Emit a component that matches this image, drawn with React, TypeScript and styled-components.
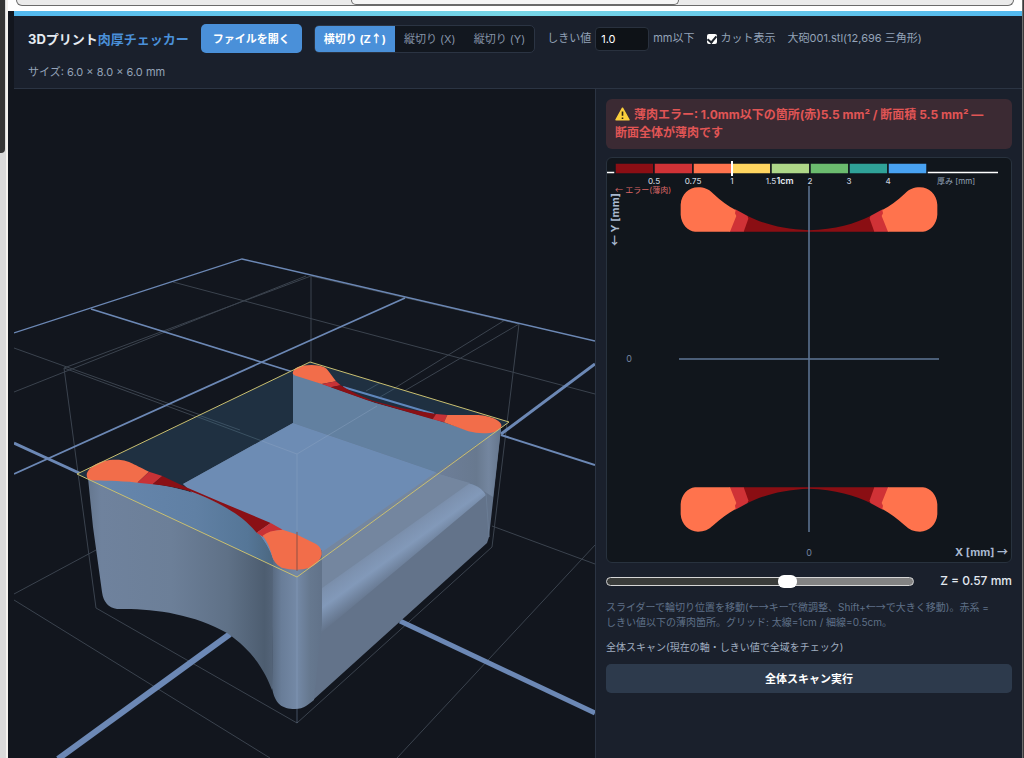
import React, { useState } from 'react';
import styled, { createGlobalStyle } from 'styled-components';

const GlobalStyle = createGlobalStyle`
  * { box-sizing: border-box; }
  body {
    margin: 0;
    background: #dcdcdc;
    font-family: Inter, "Noto Sans CJK JP", sans-serif;
    font-size: 11px;
    color: #e2e8f0;
  }
  button, input { font-family: inherit; }
`;

const Desktop = styled.div`
  display: flex;
  min-height: 100vh;
  background: #3a3a3a;
`;

const DesktopEdge = styled.div`
  flex: none;
  width: 8px;
  background: #dadada;
  border-right: 2px solid #f4f2ee;
`;

const DarkDock = styled.div`
  width: 5px;
  height: 153px;
  background: #353535;
  border-bottom-right-radius: 4px;
`;

const BrowserWindow = styled.div`
  flex: 1;
  min-width: 0;
  display: flex;
  flex-direction: column;
  background: #12161e;
  border-right: 1px solid #6d6d6d;
  margin-right: 1px;
`;

const BrowserBar = styled.div`
  flex: none;
  height: 11px;
  padding: 0 8px;
  background: #ffffff;
`;

const TabStrip = styled.div`
  display: flex;
  justify-content: center;
  height: 6px;
  background: #ebebeb;
  border: 1px solid #6b6b6b;
  border-top: 0;
  border-radius: 0 0 14px 14px;
`;

const AddressPill = styled.div`
  width: 33%;
  height: 5px;
  background: #f6f6f6;
  border: 1px solid #6b6b6b;
  border-top: 0;
  border-radius: 0 0 10px 10px;
`;

const Page = styled.div`
  flex: 1;
  display: flex;
  flex-direction: column;
  margin-left: 6px;
`;

const AccentStripe = styled.div`
  flex: none;
  height: 5px;
  background: linear-gradient(90deg, #53b9ef, #78d6e6 50%, #53b9ef);
`;

const Header = styled.header`
  display: flex;
  flex-wrap: wrap;
  align-items: center;
  gap: 12px;
  padding: 8px 14px;
  background: #1a202c;
  border-bottom: 1px solid #2b3443;
`;

const Title = styled.h1`
  margin: 0;
  font-size: 13px;
  line-height: 20px;
  font-weight: 700;
  color: #e6ebf2;
  white-space: nowrap;
`;

const TitleAccent = styled.span`
  color: #4a90d9;
`;

const Arrow = styled.span`
  font-family: "Noto Sans CJK JP", sans-serif;
`;

const SvgArrow = styled.tspan`
  font-family: "Noto Sans CJK JP", sans-serif;
`;

const Button = styled.button<{ $wide?: boolean }>`
  width: ${(p) => (p.$wide ? '100%' : 'auto')};
  height: 29px;
  padding: 0 12px;
  border: 0;
  border-radius: 5px;
  background: ${(p) => (p.$wide ? '#2d3a4c' : '#4a90d9')};
  color: #ffffff;
  font-size: 11px;
  line-height: 16px;
  font-weight: 700;
  cursor: pointer;
`;

const Segments = styled.div`
  display: flex;
  height: 28px;
  overflow: hidden;
  background: #12171f;
  border: 1px solid #2b3443;
  border-radius: 5px;
`;

const Segment = styled.button<{ $active: boolean }>`
  padding: 0 9px;
  border: 0;
  background: ${(p) => (p.$active ? '#4a90d9' : 'transparent')};
  color: ${(p) => (p.$active ? '#ffffff' : '#8593a8')};
  font-size: 11px;
  line-height: 16px;
  font-weight: ${(p) => (p.$active ? 700 : 400)};
  white-space: nowrap;
  cursor: pointer;
`;

const Field = styled.label`
  display: flex;
  align-items: center;
  gap: 4px;
  font-size: 11px;
  line-height: 15px;
  color: #94a3b8;
  white-space: nowrap;
`;

const NumberBox = styled.input`
  width: 54px;
  height: 24px;
  padding: 0 5px;
  background: #0e1217;
  border: 1px solid #29313e;
  border-radius: 4px;
  color: #ffffff;
  font-size: 11px;
`;

const TickBox = styled.input`
  appearance: none;
  display: grid;
  place-items: center;
  width: 10px;
  height: 10px;
  margin: 0;
  background: #ffffff;
  border-radius: 2px;
  &:checked::before {
    content: "";
    width: 4px;
    height: 7px;
    border: solid #1d232c;
    border-width: 0 2px 2px 0;
    transform: rotate(40deg);
  }
`;

const Meta = styled.span`
  font-size: 11px;
  line-height: 15px;
  color: #94a3b8;
  white-space: nowrap;
`;

const Main = styled.main`
  flex: 1;
  display: grid;
  grid-template-columns: minmax(0, 1fr) 427px;
`;

const Viewport = styled.section`
  display: flex;
  min-width: 0;
  overflow: hidden;
  background: #12161e;
`;

const SceneSvg = styled.svg`
  display: block;
  width: 100%;
  height: 100%;
`;

const SidePanel = styled.aside`
  display: flex;
  flex-direction: column;
  gap: 8px;
  padding: 10px;
  background: #1a202c;
  border-left: 1px solid #2b3443;
`;

const ErrorBox = styled.div`
  padding: 7px 18px 7px 9px;
  border-radius: 6px;
  background: #3b2a33;
  color: #e05555;
  font-size: 12px;
  line-height: 18px;
  font-weight: 700;
`;

const WarningIcon = styled.svg`
  width: 15px;
  height: 14px;
  margin-right: 4px;
  vertical-align: -2px;
`;

const SectionCard = styled.div`
  overflow: hidden;
  background: #11161c;
  border: 1px solid #28323e;
  border-radius: 6px;
`;

const SectionSvg = styled.svg`
  display: block;
  width: 100%;
`;

const SliderRow = styled.label`
  display: flex;
  align-items: center;
  gap: 26px;
  height: 20px;
`;

const Slider = styled.input<{ $fill: number }>`
  appearance: none;
  flex: 1;
  min-width: 0;
  height: 9px;
  margin: 0;
  border: 1px solid #d6d6d6;
  border-radius: 5px;
  background: linear-gradient(90deg, #3a3c3a ${(p) => p.$fill}%, #838383 ${(p) => p.$fill}%);
  &::-webkit-slider-thumb {
    appearance: none;
    width: 19px;
    height: 13px;
    border-radius: 6px;
    background: #ffffff;
  }
`;

const SliderValue = styled.output`
  font-size: 12px;
  line-height: 16px;
  font-weight: 500;
  color: #e2e8f0;
  white-space: nowrap;
`;

const Hint = styled.p`
  margin: 0;
  padding-right: 14px;
  font-size: 10px;
  line-height: 15px;
  color: #5f7088;
`;

const ScanLabel = styled.h2`
  margin: 0;
  font-size: 10px;
  line-height: 18px;
  font-weight: 400;
  color: #a0aec0;
`;

const THICK = '#6c88b5';
const THIN = '#3b434e';

function Scene() {
  return (
    <SceneSvg viewBox="14 89 581 669" preserveAspectRatio="xMidYMid slice" role="img">
      <defs>
        <linearGradient id="outer" gradientUnits="userSpaceOnUse" x1="88" y1="0" x2="274" y2="0">
          <stop offset="0" stopColor="#65778f" />
          <stop offset="0.07" stopColor="#6f829d" />
          <stop offset="0.45" stopColor="#6c7f98" />
          <stop offset="0.75" stopColor="#5f7187" />
          <stop offset="0.95" stopColor="#4d5d70" />
          <stop offset="1" stopColor="#55657a" />
        </linearGradient>
        <linearGradient id="outerTint" gradientUnits="userSpaceOnUse" x1="100" y1="0" x2="274" y2="0">
          <stop offset="0" stopColor="#6686ad" />
          <stop offset="0.55" stopColor="#6080a4" />
          <stop offset="0.85" stopColor="#557697" />
          <stop offset="1" stopColor="#4b6780" />
        </linearGradient>
        <linearGradient id="post" gradientUnits="userSpaceOnUse" x1="271" y1="0" x2="323" y2="0">
          <stop offset="0" stopColor="#56677d" />
          <stop offset="0.2" stopColor="#697d98" />
          <stop offset="0.5" stopColor="#7489a6" />
          <stop offset="0.75" stopColor="#66788f" />
          <stop offset="1" stopColor="#617289" />
        </linearGradient>
        <linearGradient id="rail" gradientUnits="userSpaceOnUse" x1="388" y1="530" x2="414" y2="566">
          <stop offset="0" stopColor="#74869f" />
          <stop offset="0.3" stopColor="#7d92b0" />
          <stop offset="0.55" stopColor="#8299b9" />
          <stop offset="0.8" stopColor="#70839e" />
          <stop offset="1" stopColor="#63738a" />
        </linearGradient>
        <linearGradient id="farPost" gradientUnits="userSpaceOnUse" x1="440" y1="0" x2="501" y2="0">
          <stop offset="0" stopColor="#6d7e98" />
          <stop offset="0.6" stopColor="#68798f" />
          <stop offset="0.8" stopColor="#74869f" />
          <stop offset="1" stopColor="#64758c" />
        </linearGradient>
        <clipPath id="slicePlane">
          <path d="M310 362 L509 422 L297 577 L77 474 Z" />
        </clipPath>
      </defs>

      <g fill="none" stroke={THIN} strokeWidth="1">
        <path d="M173 282 L595 394" />
        <path d="M306 276 L14 392" />
        <path d="M14 348 L234 427" />
        <path d="M505 320 L377 399" />
        <path d="M14 594 L96 550" />
        <path d="M14 600 L270 758" />
        <path d="M492 526 L595 564" />
        <path d="M595 545 L397 758" />
        <path d="M311 362 V276 L519 324 L492 547 L297 723 L96 608 L64 368 L311 276" />
        <path d="M64 368 L297 454 M519 324 L370 411" />
      </g>

      <g fill="none" stroke={THICK}>
        <path d="M14 333 L242 259 L595 341" strokeWidth="1.3" />
        <path d="M91 309 L293 372" strokeWidth="1.6" />
        <path d="M405 298 L262 362 L14 474" strokeWidth="1.8" />
        <path d="M14 443 L90 478" strokeWidth="3" />
        <path d="M595 364 L501 434" strokeWidth="3" />
        <path d="M501 435 L595 465" strokeWidth="2" />
        <path d="M400 621 L595 713" strokeWidth="5" />
        <path d="M230 634 L58 759" strokeWidth="6" />
      </g>

      <path d="M310 362 L509 422 L297 577 L77 474 Z" fill="#1f3041" />
      <path d="M343 387 L434 414" fill="none" stroke="#5f87bc" strokeWidth="2" />
      <path d="M366 391 L414 363 M380 397 L430 368 M190 414 L262 441 M190 412 L240 430" fill="none" stroke="#3b5062" strokeWidth="1" clipPath="url(#slicePlane)" />

      <path d="M293 373 L322 384 L375 403 L433 419 L470 431 L501 429 L489 537 L487 543 L313 700 L285 650 L240 520 L183 484 L293 423 Z" fill="#63738a" />
      <path d="M293 373 L322 384 L375 403 L433 419 L470 431 L501 429 L489 490 L474 485 L293 423 Z" fill="#6280a0" />
      <path d="M293 423 L474 485 L321 592 L240 540 L183 484 Z" fill="#6d8cb4" />
      <path d="M435 473 L501 428 L493 497 L474 485 Z" fill="url(#farPost)" />
      <path d="M322 552 L435 473 L474 485 Q482 488 486 495 L320 634 Z" fill="url(#rail)" />
      <path d="M322 560 L435 473 L470 483 L322 588 Z" fill="#74869f" />
      <path d="M486 493 L489 537" stroke="#6b7d95" strokeWidth="1" />

      <path d="M88 478 L93 527 L102 592 Q104 607 117 609 C150 608 192 613 227 633 C255 652 266 674 272 690 L274 562 C266 538 250 518 213 501 C180 485 140 481 88 478 Z" fill="url(#outer)" />
      <path d="M88 478 L93 527 L102 592 Q104 607 117 609 C150 608 192 613 227 633 C255 652 266 674 272 690 L274 562 C266 538 250 518 213 501 C180 485 140 481 88 478 Z" fill="url(#outerTint)" clipPath="url(#slicePlane)" />
      <path d="M273 560 L272 688 C275 704 282 709 295 709 C304 709 309 704 314 700 L319 650 L322 625 V550 Z" fill="url(#post)" />

      <g transform="translate(60 340) scale(.33333)">
        <path d="M80 405 C82 382 120 358 170 359 C205 360 215 370 267 395 L232 428 C170 421 130 424 92 421 Q80 418 80 405Z" fill="#f26d4a" />
        <path d="M267 395 L307 408 L278 433 L232 428Z" fill="#c83236" />
        <path d="M307 408 L375 440 L480 485 L632 549 L590 578 C555 537 520 513 460 483 C400 453 350 440 278 433Z" fill="#8a1015" />
        <path d="M632 549 L668 569 Q625 573 608 590 L590 578Z" fill="#c83236" />
      </g>
      <g transform="translate(60 520) scale(.33333)">
        <path d="M608 47 Q625 31 668 29 L707 42 L768 72 Q786 82 785 103 Q780 130 750 143 Q710 155 665 143 Q640 132 634 100 Q625 68 608 47Z" fill="#f26d4a" />
      </g>
      <g transform="translate(240 340) scale(.33333)">
        <path d="M158 100 Q160 75 215 75 C245 76 258 80 268 97 L288 124 L245 132 L172 109 Q160 106 158 100Z" fill="#f26d4a" />
        <path d="M288 124 L302 136 L272 142 L245 132Z" fill="#c83236" />
        <path d="M302 136 Q345 163 400 183 L480 203 L588 222 L578 238 L480 209 L380 180 L272 142Z" fill="#8a1015" />
        <path d="M588 222 L622 225 L612 247 L578 238Z" fill="#c83236" />
        <path d="M622 225 L715 225 C755 228 787 243 784 260 C775 280 730 285 685 274 L612 247Z" fill="#f26d4a" />
      </g>

      <path d="M262 441 L297 454 L377 406 M297 454 V531 M297 577 V723" fill="none" stroke="#8fa6c4" strokeOpacity=".4" />
      <path d="M297 532 V571" stroke="#8f5143" strokeWidth="1" />
      <path d="M310 362 L509 422 L297 577 L77 474 Z" fill="none" stroke="#c9bf70" strokeWidth="1" />
    </SceneSvg>
  );
}

const BANDS = ['#8b0e14', '#d03236', '#ff734d', '#ffd560', '#aed788', '#6bbb6e', '#2fa298', '#48a2f2'];
const LIMITS = ['0.5', '0.75', '1', '1.5', '2', '3', '4'];

function WallHalf() {
  return (
    <>
      <path d="M455 384 C500 407 560 424 640 427 V431 H441 Z" fill="#8a0e13" />
      <path d="M418 364 L455 384 L457 392 L443 431 H400 Z" fill="#d03236" />
      <path d="M254 350 C256 319 279 298 306 298 C325 298 337 303 352 317 C375 338 395 353 419 366 L417 376 L421 384 L402 431 H297 C274 428 256 409 254 380 Z" fill="#ff734d" />
    </>
  );
}

function Wall() {
  return (
    <g>
      <WallHalf />
      <g transform="translate(1278 0) scale(-1 1)">
        <WallHalf />
      </g>
    </g>
  );
}

function SectionView() {
  return (
    <SectionSvg viewBox="607 158 404 404" role="img">
      <g transform="translate(596 88) scale(.33333)">
        <Wall />
      </g>
      <g transform="translate(596 631) scale(.33333 -.33333)">
        <Wall />
      </g>
      <g stroke="#5f7796" strokeWidth="2" strokeOpacity=".75">
        <path d="M809 186 V532" />
        <path d="M679 359 H939" />
      </g>
      <path d="M607 172.500 H998" stroke="#ffffff" strokeWidth="1.500" />
      {BANDS.map((color, i) => (
        <rect key={color} x={615 + i * 39} y="163" width="39" height="11" fill={color} stroke="#11161c" strokeWidth="1.500" />
      ))}
      <path d="M732 161 V176" stroke="#ffffff" strokeWidth="2" />
      <g fill="#c6cedb" fontSize="8" fontWeight="500" textAnchor="middle">
        {LIMITS.map((limit, i) => (
          <text key={limit} x={654 + i * 39} y="184">{limit}</text>
        ))}
      </g>
      <text x="785" y="184" fill="#e2e8f0" fontSize="9" fontWeight="600" textAnchor="middle">1cm</text>
      <text x="937" y="184" fill="#94a3b8" fontSize="8">厚み [mm]</text>
      <text x="615" y="193" fill="#d96666" fontSize="8"><SvgArrow>←</SvgArrow> エラー(薄肉)</text>
      <g fill="#a9b9d0" fontSize="11" fontWeight="700">
        <text transform="translate(619 246) rotate(-90)"><SvgArrow>←</SvgArrow> Y [mm]</text>
        <text x="1008" y="556" textAnchor="end">X [mm] <SvgArrow>→</SvgArrow></text>
      </g>
      <g fill="#7485a0" fontSize="9" textAnchor="middle">
        <text x="629" y="362">0</text>
        <text x="809" y="556">0</text>
      </g>
    </SectionSvg>
  );
}

const AXES = [
  { id: 'z', label: <>横切り (Z<Arrow>↑</Arrow>)</> },
  { id: 'x', label: <>縦切り (X)</> },
  { id: 'y', label: <>縦切り (Y)</> },
];
const Z_MIN = -3;
const Z_MAX = 3;

export default function App() {
  const [axis, setAxis] = useState('z');
  const [z, setZ] = useState(0.57);
  const [cut, setCut] = useState(true);
  const [limit, setLimit] = useState('1.0');

  return (
    <>
      <GlobalStyle />
      <Desktop>
        <DesktopEdge>
          <DarkDock />
        </DesktopEdge>
        <BrowserWindow>
          <BrowserBar>
            <TabStrip>
              <AddressPill />
            </TabStrip>
          </BrowserBar>
          <Page>
            <AccentStripe />
            <Header>
              <Title>
                3Dプリント<TitleAccent>肉厚チェッカー</TitleAccent>
              </Title>
              <Button type="button">ファイルを開く</Button>
              <Segments>
                {AXES.map(({ id, label }) => (
                  <Segment key={id} type="button" $active={axis === id} onClick={() => setAxis(id)}>
                    {label}
                  </Segment>
                ))}
              </Segments>
              <Field>
                しきい値
                <NumberBox type="number" step="0.1" value={limit} onChange={(e) => setLimit(e.target.value)} />
                mm以下
              </Field>
              <Field>
                <TickBox type="checkbox" checked={cut} onChange={(e) => setCut(e.target.checked)} />
                カット表示
              </Field>
              <Meta>大砲001.stl(12,696 三角形)</Meta>
              <Meta>サイズ: 6.0 × 8.0 × 6.0 mm</Meta>
            </Header>
            <Main>
              <Viewport>
                <Scene />
              </Viewport>
              <SidePanel>
                <ErrorBox role="alert">
                  <WarningIcon viewBox="0 0 15 14" aria-hidden="true">
                    <path d="M7.500 1.200 L14 12.800 H1 Z" fill="#fccf3c" stroke="#fccf3c" strokeWidth="1.500" strokeLinejoin="round" />
                    <path d="M7.500 4.500 V8.800 M7.500 10.500 V12" stroke="#2b2410" strokeWidth="1.600" />
                  </WarningIcon>
                  薄肉エラー: 1.0mm以下の箇所(赤)5.5 mm² / 断面積 5.5 mm² — 断面全体が薄肉です
                </ErrorBox>
                <SectionCard>
                  <SectionView />
                </SectionCard>
                <SliderRow>
                  <Slider
                    type="range"
                    aria-label="輪切り位置"
                    min={Z_MIN}
                    max={Z_MAX}
                    step="0.01"
                    value={z}
                    $fill={((z - Z_MIN) / (Z_MAX - Z_MIN)) * 100}
                    onChange={(e) => setZ(Number(e.target.value))}
                  />
                  <SliderValue>Z = {z.toFixed(2)} mm</SliderValue>
                </SliderRow>
                <Hint>
                  スライダーで輪切り位置を移動(<Arrow>←→</Arrow>キーで微調整、Shift+<Arrow>←→</Arrow>で大きく移動)。赤系 = しきい値以下の薄肉箇所。グリッド: 太線=1cm / 細線=0.5cm。
                </Hint>
                <ScanLabel>全体スキャン(現在の軸・しきい値で全域をチェック)</ScanLabel>
                <Button type="button" $wide>全体スキャン実行</Button>
              </SidePanel>
            </Main>
          </Page>
        </BrowserWindow>
      </Desktop>
    </>
  );
}
